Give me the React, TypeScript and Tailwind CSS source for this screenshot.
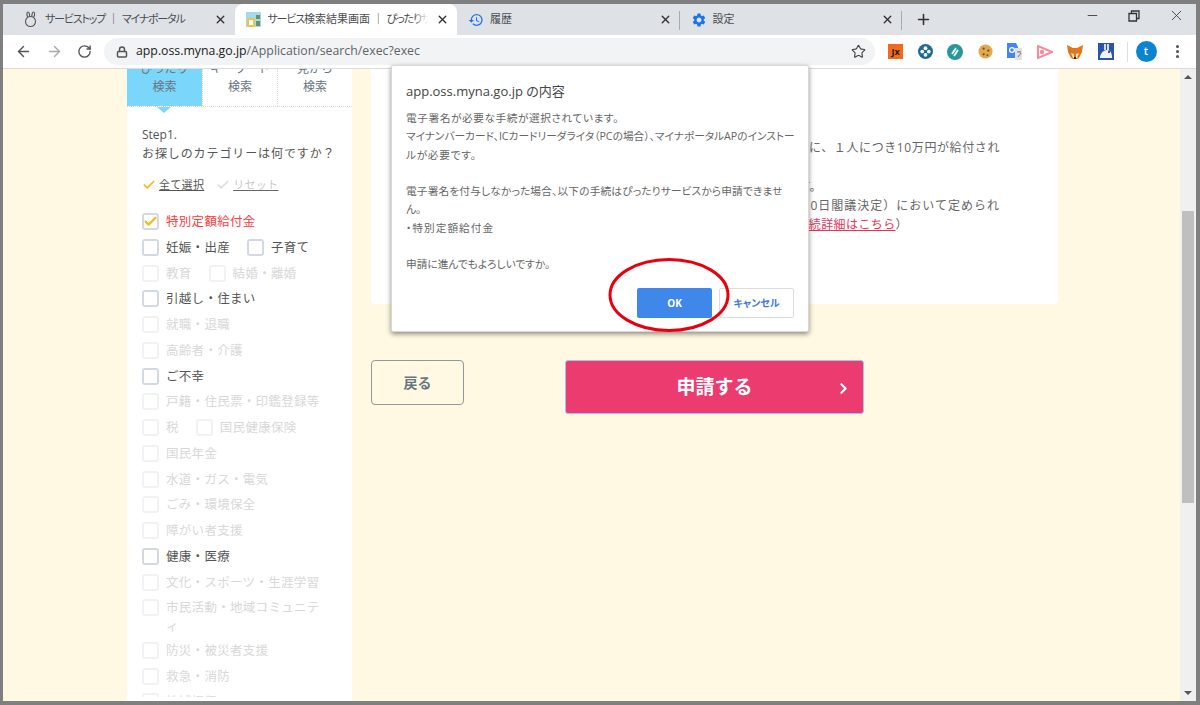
import { ArrowLeft, ArrowRight, RotateCw, Lock, Star, Plus, X, Minus, MoreVertical, ChevronRight, Check } from "lucide-react"
import { MdHistory, MdSettings } from "react-icons/md"

const font = "font-['Open_Sans','Noto_Sans_CJK_JP',sans-serif] [font-feature-settings:'palt']"
const plain = "[font-feature-settings:normal]"

type Row = { label: string; on?: boolean; red?: boolean; checked?: boolean }

const rows: Row[][] = [
  [{ label: "特別定額給付金", on: true, red: true, checked: true }],
  [{ label: "妊娠・出産", on: true }, { label: "子育て", on: true }],
  [{ label: "教育" }, { label: "結婚・離婚" }],
  [{ label: "引越し・住まい", on: true }],
  [{ label: "就職・退職" }],
  [{ label: "高齢者・介護" }],
  [{ label: "ご不幸", on: true }],
  [{ label: "戸籍・住民票・印鑑登録等" }],
  [{ label: "税" }, { label: "国民健康保険" }],
  [{ label: "国民年金" }],
  [{ label: "水道・ガス・電気" }],
  [{ label: "ごみ・環境保全" }],
  [{ label: "障がい者支援" }],
  [{ label: "健康・医療", on: true }],
  [{ label: "文化・スポーツ・生涯学習" }],
  [{ label: "市民活動・地域コミュニティ" }],
  [{ label: "防災・被災者支援" }],
  [{ label: "救急・消防" }],
  [{ label: "地域振興" }],
]

function Kana({ children }: { children: React.ReactNode }) {
  return <span className="tracking-[-1.2px]">{children}</span>
}

function Tab({ icon, title, active, sep }: { icon: React.ReactNode; title: React.ReactNode; active?: boolean; sep?: boolean }) {
  return (
    <div className={`relative flex h-full w-[222.5px] shrink-0 items-center pl-[11px] pr-[8px] ${active ? "rounded-t-[8px] bg-white" : ""}`}>
      <div className="flex w-[22px] shrink-0 items-center">{icon}</div>
      <div className="relative min-w-0 flex-1 overflow-hidden whitespace-nowrap text-[11px] text-[#4a4d52]">
        {title}
        {active && <div className="absolute inset-y-0 right-0 w-[14px] bg-gradient-to-r from-transparent to-white" />}
      </div>
      <X className="ml-2 shrink-0 text-[#333]" size={13} strokeWidth={2.6} />
      {sep && <div className="absolute right-0 top-[7px] h-[19px] w-px bg-[#a9abaf]" />}
    </div>
  )
}

function Box({ on, checked }: { on?: boolean; checked?: boolean }) {
  return (
    <div className={`relative h-[17px] w-[17px] shrink-0 rounded-[3px] border-2 bg-white ${on ? "border-[#d3d9e4]" : "border-[#f1f2f4]"}`}>
      {checked && <Check className="absolute -left-[1px] -top-[1px] text-[#f5b91d]" size={15} strokeWidth={3.4} />}
    </div>
  )
}

function Sidebar() {
  return (
    <aside className={`w-[225px] shrink-0 bg-white ${plain}`}>
      <div className="relative">
        <div className="flex h-[38px] overflow-hidden border-b border-dotted border-[#d5d8dc] text-center text-[12px] leading-[19px] text-[#66757f]">
          <div className="flex w-[75px] flex-col items-center justify-end bg-[#7ad6fb] pb-[10px]">
            <span className="-mb-[1px] shrink-0">ぴったり</span>
            <span className="shrink-0">検索</span>
          </div>
          <div className="flex w-[75px] flex-col items-center justify-end border-l border-dotted border-[#d5d8dc] pb-[10px]">
            <span className="-mb-[1px] shrink-0">キーワード</span>
            <span className="shrink-0">検索</span>
          </div>
          <div className="flex w-[75px] flex-col items-center justify-end border-l border-dotted border-[#d5d8dc] pb-[10px]">
            <span className="-mb-[1px] shrink-0">見から</span>
            <span className="shrink-0">検索</span>
          </div>
        </div>
        <div className="absolute -bottom-[6px] left-[30px] h-0 w-0 border-x-[7px] border-t-[6px] border-x-transparent border-t-[#7ad6fb]" />
      </div>
      <div className="h-[590px] overflow-hidden pl-[15px] pt-[18px] text-[12px] leading-[19px] text-[#555]">
        <div>Step1.</div>
        <div className="tracking-[0.9px]">お探しのカテゴリーは何ですか？</div>
        <div className="mt-[12px] flex items-center text-[11px] tracking-[0.3px]">
          <Check className="mr-[3px] text-[#f5b91d]" size={14} strokeWidth={3} />
          <span className="underline">全て選択</span>
          <Check className="ml-[12px] mr-[3px] text-[#dcdee1]" size={14} strokeWidth={3} />
          <span className="text-[#c9c9c9] underline decoration-[#666]">リセット</span>
        </div>
        <div className="mt-[18px]">
          {rows.map((row, i) => (
            <div key={i} className={`flex w-[205px] items-start ${i === 15 ? "pb-[4.5px]" : "pb-[6.75px]"}`}>
              {row.map((item, j) => (
                <div key={j} className={`flex items-start ${j > 0 ? "ml-[17px]" : ""}`}>
                  <div className="mt-[1px]"><Box on={item.on} checked={item.checked} /></div>
                  <span
                    className={`ml-[7px] text-[12.5px] tracking-[0.3px] ${
                      item.red ? "text-[#ff3b3b]" : item.on ? "text-[#555]" : "text-[#d8d8d8]"
                    } ${i === 15 ? "w-[160px] [line-break:anywhere]" : "whitespace-nowrap"}`}
                  >
                    {item.label}
                  </span>
                </div>
              ))}
            </div>
          ))}
        </div>
      </div>
    </aside>
  )
}

function Dialog() {
  return (
    <div className="absolute left-[388px] top-[61px] h-[267px] w-[418px] rounded-[2px] border border-[#d8d8d8] bg-white pl-[14px] pt-[16px] text-[10.7px] leading-[18.3px] text-[#666] shadow-[0_2px_5px_rgba(0,0,0,0.45)]">
      <div className="text-[13px] leading-[18px] text-[#444]">app.oss.myna.go.jp の内容</div>
      <div className="mt-[9px] whitespace-nowrap">
        <div className="tracking-[0.55px]">電子署名が必要な手続が選択されています。</div>
        <div>マイナンバーカード、ICカードリーダライタ（PCの場合）、マイナポータルAPのインストー</div>
        <div className="tracking-[0.7px]">ルが必要です。</div>
        <div className="h-[18.3px]" />
        <div className="tracking-[0.15px]">電子署名を付与しなかった場合、以下の手続はぴったりサービスから申請できませ</div>
        <div>ん。</div>
        <div className="tracking-[1px]">・特別定額給付金</div>
        <div className="h-[18.3px]" />
        <div>申請に進んでもよろしいですか。</div>
      </div>
      <div className="mt-[14px] flex justify-end gap-[7px] pr-[14px]">
        <div className="flex h-[30px] w-[75px] items-center justify-center rounded-[2px] bg-[#3f88ea] text-[10px] font-bold text-white">OK</div>
        <div className="flex h-[30px] w-[75px] items-center justify-center rounded-[2px] border border-[#dadce0] text-[10px] font-bold text-[#3f78e0]">キャンセル</div>
      </div>
    </div>
  )
}

function Extensions() {
  return (
    <div className="flex items-center gap-[14.5px]">
      <div className="flex h-[15px] w-[15px] items-center justify-center bg-[#f26b1d] text-[9px] font-bold text-[#222]">Jx</div>
      <svg width="15" height="15" viewBox="0 0 16 16"><circle cx="8" cy="8" r="8" fill="#1d6a99" /><circle cx="8" cy="4.5" r="2" fill="#fff" /><circle cx="8" cy="11.5" r="2" fill="#fff" /><circle cx="4.5" cy="8" r="2" fill="#fff" /><circle cx="11.5" cy="8" r="2" fill="#fff" /></svg>
      <svg width="16" height="16" viewBox="0 0 16 16"><circle cx="8" cy="8" r="8" fill="#26989a" /><path d="M5 10 L9 4 M7 12 L11 6" stroke="#fff" strokeWidth="1.8" /></svg>
      <svg width="15" height="15" viewBox="0 0 16 16"><circle cx="8" cy="8" r="7.5" fill="#e0a94e" /><circle cx="6" cy="5" r="1.2" fill="#7a4a1c" /><circle cx="11" cy="7" r="1.2" fill="#7a4a1c" /><circle cx="6" cy="11" r="1.2" fill="#7a4a1c" /><circle cx="10" cy="12" r="1" fill="#7a4a1c" /></svg>
      <svg width="15" height="17" viewBox="0 0 15 17"><path d="M0 0h9l2 4v11H0z" fill="#4285f4" /><path d="M8 5h7v12H8z" fill="#dfe1e5" /><circle cx="5" cy="7" r="2.4" fill="none" stroke="#fff" strokeWidth="1.3" /><path d="M10 9h4M12 8v1M11 14l3-4" stroke="#777" strokeWidth="1" fill="none" /></svg>
      <svg width="16" height="14" viewBox="0 0 16 14"><path d="M1 1v12l14-6z" fill="none" stroke="#f98a9b" strokeWidth="2" /><circle cx="5" cy="7" r="2.2" fill="#f98a9b" /></svg>
      <svg width="16" height="16" viewBox="0 0 16 16"><path d="M0 1l6 3h4l6-3-1 7-3 6-2 1H6l-2-1-3-6z" fill="#e2761b" /><path d="M4 9l3 1v4H6zM12 9l-3 1v4h1z" fill="#f6e5d0" /><path d="M7 13h2v2H7z" fill="#222" /></svg>
      <svg width="16" height="17" viewBox="0 0 16 17"><path d="M0 0h16v17H0z" fill="#2b55a8" /><path d="M7 1v6M10 1v6" stroke="#fff" strokeWidth="1.6" /><path d="M2 15c0-4 3-8 7-8s5 4 5 8z" fill="#f2f2f2" /><circle cx="11" cy="9" r="1" fill="#222" /></svg>
    </div>
  )
}

export default function App() {
  return (
    <div className={`relative flex h-[705px] w-[1200px] flex-col overflow-hidden border-b-4 border-l-[3px] border-r-4 border-t-4 border-[#7f7f7f] ${font}`}>
      {/* tab strip */}
      <div className="flex h-[31px] shrink-0 items-end bg-[#dee1e6] pl-[9px]">
        <Tab
          title={<><Kana>サービストップ</Kana> ｜ <Kana>マイナポータル</Kana></>}
          icon={
            <svg width="15" height="17" viewBox="0 0 15 17" fill="none" stroke="#555" strokeWidth="1.1">
              <path d="M5 6C3 4 4 1 5 1s2 3 1.5 5M9 6c-.5-2 .5-5 1.5-5s2 3 0 5" />
              <circle cx="7.5" cy="10.5" r="5" />
            </svg>
          }
        />
        <Tab
          active
          title={<><Kana>サービス</Kana>検索結果画面 ｜ <Kana>ぴったりサービス</Kana></>}
          icon={
            <svg width="15" height="15" viewBox="0 0 15 15">
              <path d="M0 0h15v15H0z" fill="#a5d9ec" />
              <path d="M1 6h8v9H1z" fill="#e9c64a" />
              <path d="M3 8h4v5H3z" fill="#fff" />
              <path d="M10 3h4v4h-4zM10 9h4v5h-4z" fill="#6b8f71" />
            </svg>
          }
        />
        <Tab title="履歴" sep icon={<MdHistory className="text-[#1a73e8]" size={16} />} />
        <Tab title="設定" sep icon={<MdSettings className="text-[#1a73e8]" size={16} />} />
        <Plus className="ml-[13px] mb-[7px] text-[#333]" size={17} strokeWidth={2.2} />
        <div className="flex-1" />
        <div className="mb-[11px] flex items-center text-[#444]">
          <Minus size={15} strokeWidth={1.5} />
          <svg className="ml-[28px]" width="12" height="12" viewBox="0 0 12 12" fill="none" stroke="#333" strokeWidth="1.3">
            <path d="M1 3.5h7.5V11H1zM3.5 3.5V1H11v7.5H8.5" />
          </svg>
          <X className="ml-[28px] mr-[11px]" size={17} strokeWidth={1.3} />
        </div>
      </div>

      {/* toolbar */}
      <div className="flex h-[34px] shrink-0 items-center border-b border-[#dadce0] bg-white">
        <ArrowLeft className="ml-[12px] text-[#555]" size={17} strokeWidth={2} />
        <ArrowRight className="ml-[14px] text-[#aaa]" size={17} strokeWidth={2} />
        <RotateCw className="ml-[14px] text-[#555]" size={15} strokeWidth={2.2} />
        <div className="ml-[12px] flex h-[27px] w-[771px] items-center rounded-full bg-[#f1f3f4] pl-[12px] pr-[9px]">
          <Lock className="text-[#555]" size={12} strokeWidth={3} />
          <span className="ml-[8px] flex-1 text-[12.3px] text-[#5f6368]">
            <span className="text-[#222]">app.oss.myna.go.jp</span>/Application/search/exec?exec
          </span>
          <Star className="text-[#444]" size={15} strokeWidth={1.8} />
        </div>
        <div className="ml-[13px]"><Extensions /></div>
        <div className="ml-[13px] h-[20px] w-px bg-[#e0e0e0]" />
        <div className="ml-[8px] flex h-[21px] w-[21px] items-center justify-center rounded-full bg-[#0a84d0] text-[11px] font-semibold text-white">t</div>
        <MoreVertical className="ml-[12px] text-[#555]" size={17} strokeWidth={2.4} />
      </div>

      {/* page */}
      <div className="flex min-h-0 flex-1">
        <div className="flex min-w-0 flex-1 bg-[#fff8e2] pl-[124px]">
          <Sidebar />
          <main className={`ml-[19px] w-[687px] ${plain}`}>
            <div className="h-[235px] overflow-hidden rounded-b-[4px] bg-white pr-[58px] pt-[69px] text-right text-[12px] leading-[19px] tracking-[0.4px] text-[#666]">
              <div className="whitespace-nowrap tracking-[0.6px]">に、１人につき10万円が給付され</div>
              <div className="h-[20px]" />
              <div className="whitespace-nowrap pr-[178px]">です。</div>
              <div className="whitespace-nowrap tracking-[1px]">0日閣議決定）において定められ</div>
              <div className="whitespace-nowrap pr-[92px]">
                <span className="text-[#ee3158] underline">手続詳細はこちら</span>）
              </div>
            </div>
            <div className="mt-[56px] flex items-start">
              <div className="flex h-[45px] w-[93px] items-center justify-center rounded-[4px] border border-[#8f9a9e] text-[14px] font-bold text-[#66757f]">戻る</div>
              <div className="relative ml-[101px] flex h-[54px] w-[299px] items-center justify-center rounded-[3px] border border-[#a8c0ea] bg-[#ec3b6f] text-[19px] font-bold text-white">
                申請する
                <ChevronRight className="absolute right-[11px] top-[19px]" size={17} strokeWidth={3} />
              </div>
            </div>
          </main>
        </div>
        {/* scrollbar */}
        <div className="flex w-[16px] shrink-0 flex-col items-center bg-[#f0f0f0] pt-[6px]">
          <div className="h-0 w-0 border-x-[4px] border-b-[4px] border-x-transparent border-b-[#555]" />
          <div className="mt-[132px] h-[292px] w-[12px] bg-[#bfbfbf]" />
          <div className="flex-1" />
          <div className="mb-[6px] h-0 w-0 border-x-[4px] border-t-[4px] border-x-transparent border-t-[#555]" />
        </div>
      </div>

      <Dialog />

      {/* red marker around OK */}
      <svg className="absolute left-[603px] top-[253px]" width="126" height="76" viewBox="0 0 126 76" fill="none">
        <ellipse cx="63" cy="38" rx="59" ry="35.5" stroke="#e8000d" strokeWidth="3" />
      </svg>
    </div>
  )
}
